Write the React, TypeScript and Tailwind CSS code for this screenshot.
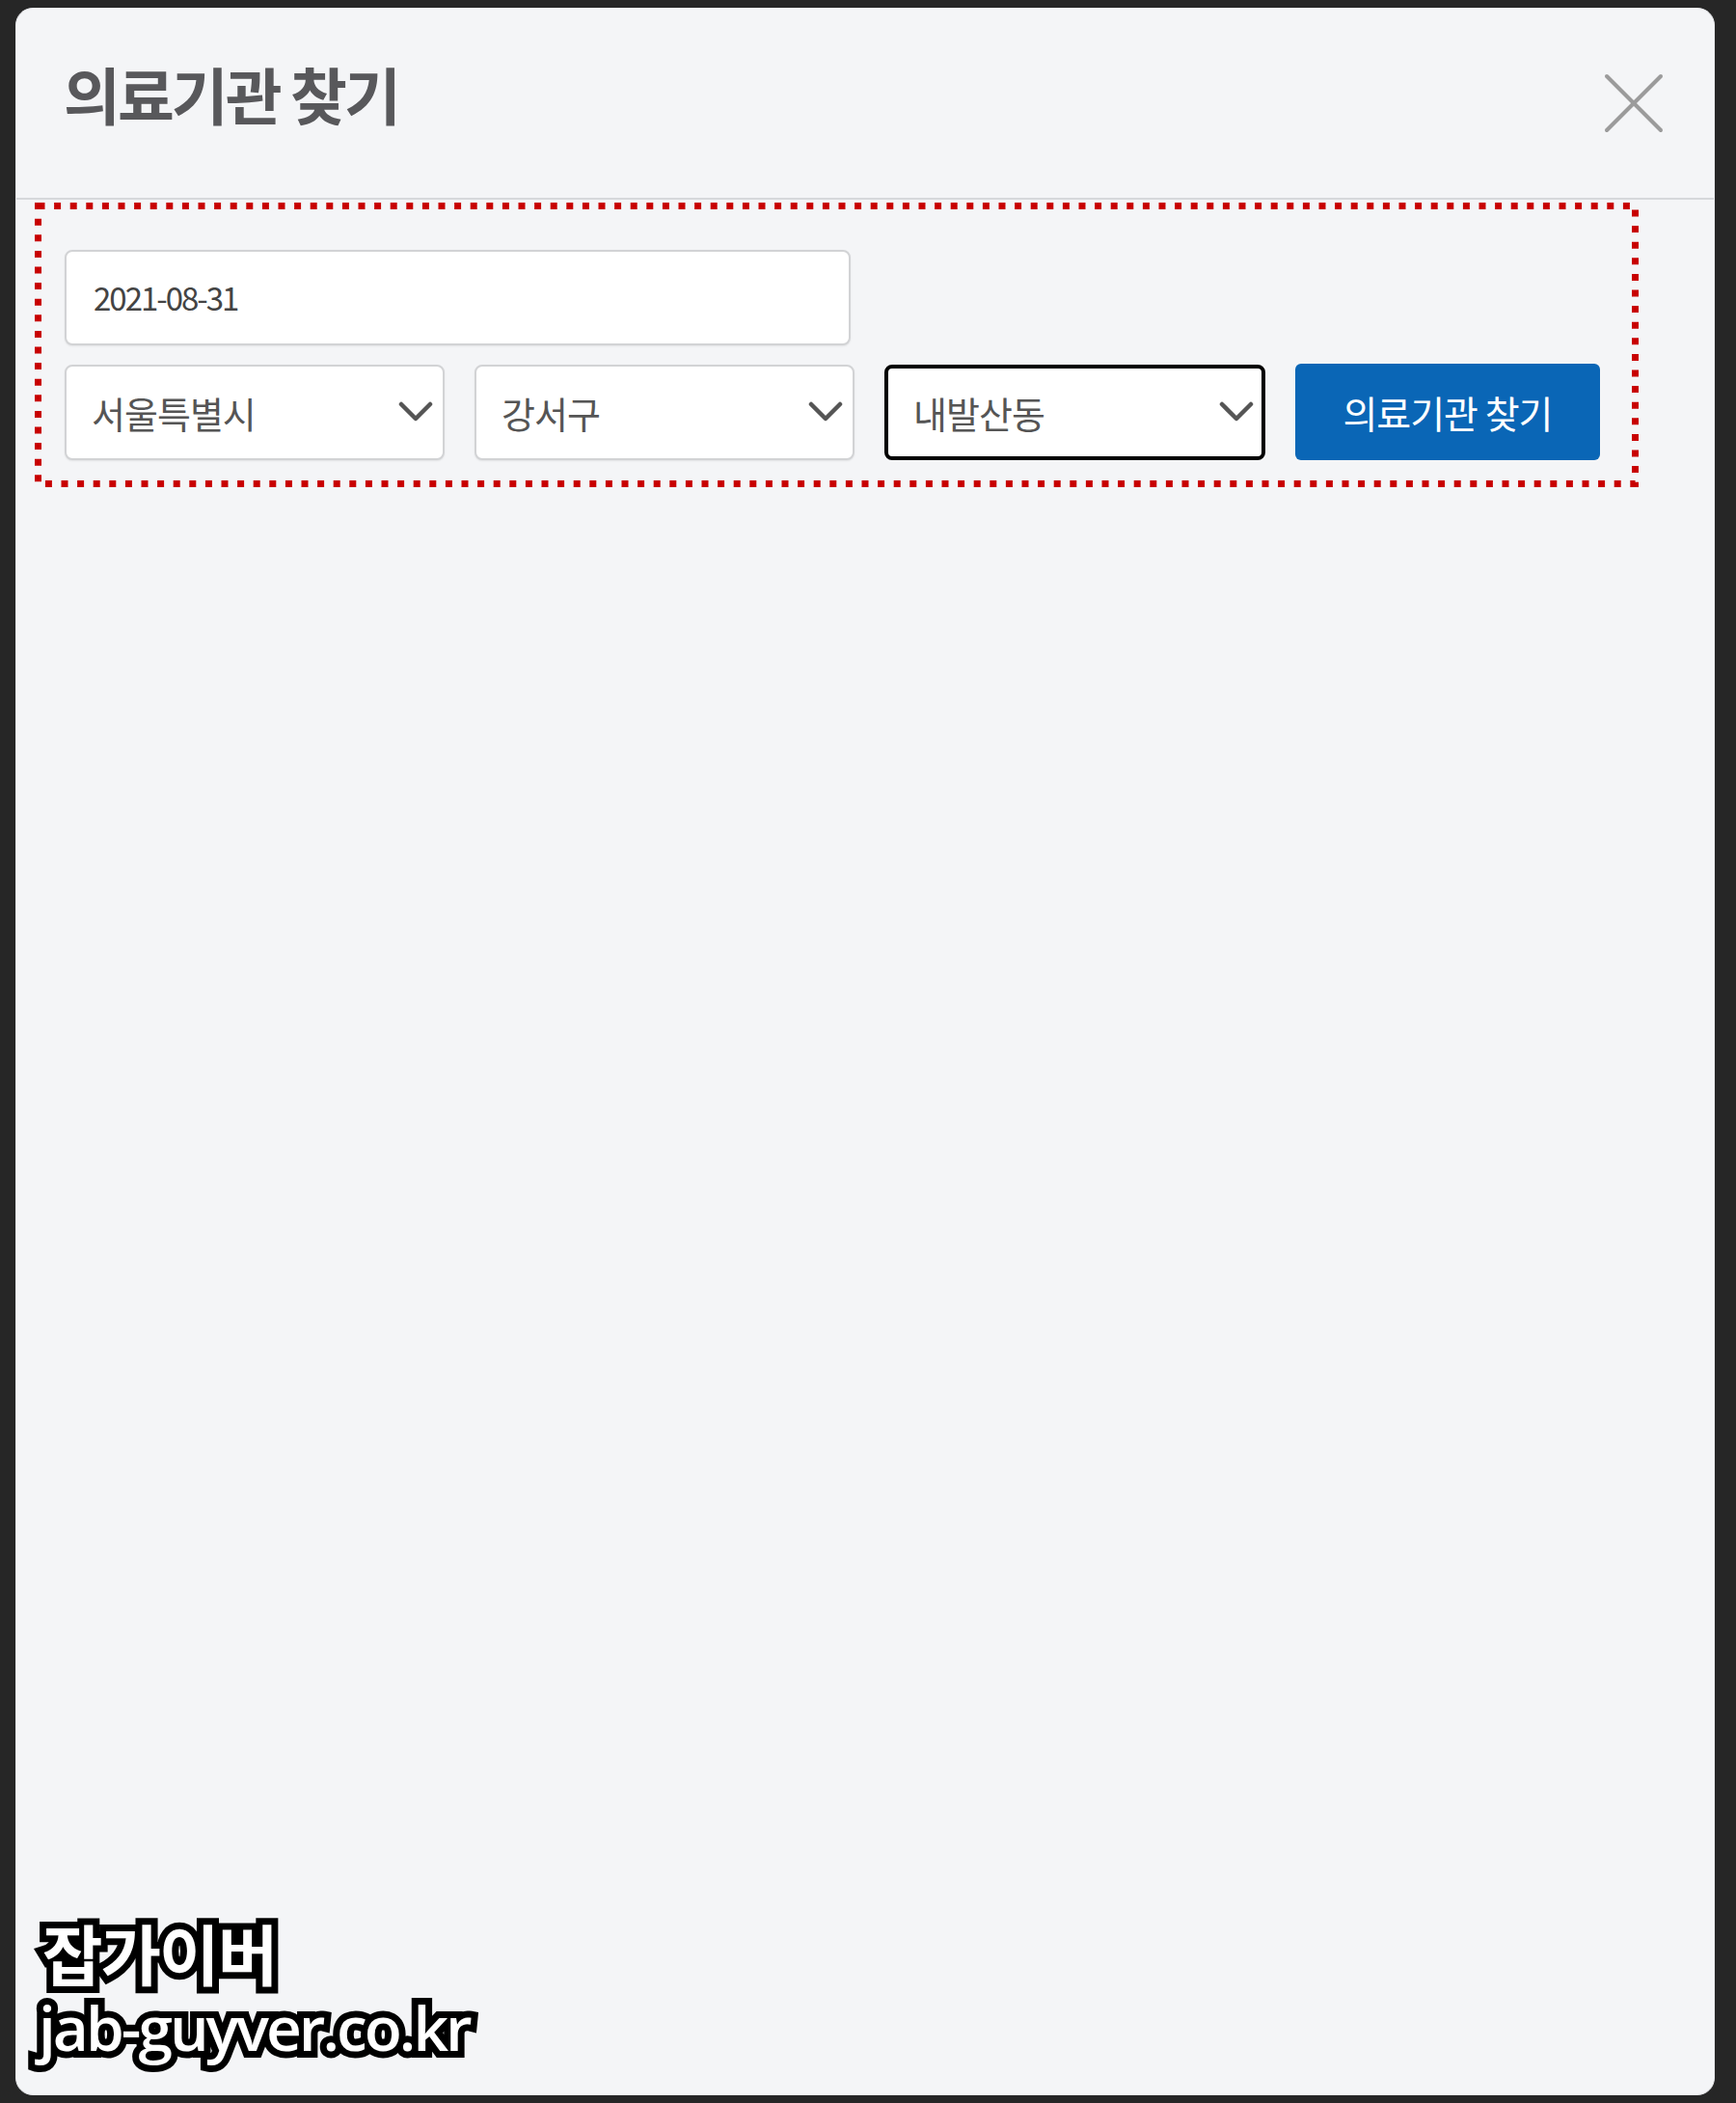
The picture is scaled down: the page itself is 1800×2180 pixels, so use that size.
function Chevron() {
    return (
        <svg width="36" height="22" viewBox="0 0 36 22" fill="none">
            <polyline points="3,3 18,18 33,3" stroke="#555" strokeWidth="4.5" strokeLinecap="round" strokeLinejoin="round" />
        </svg>
    );
}

function SelectBox({ label, focused }: { label: string; focused?: boolean }) {
    return (
        <div
            className={
                focused
                    ? "flex items-center justify-between w-[395px] h-[99px] bg-white rounded-[8px] border-[4px] border-black pl-[26px] pr-[8px]"
                    : "flex items-center justify-between w-[394px] h-[99px] bg-white rounded-[8px] border-2 border-[#d2d3d5] shadow-[0_1px_2px_rgba(0,0,0,0.08)] pl-[26px] pr-[10px]"
            }
        >
            <span className="text-[38px] text-[#555] tracking-[-1px]">{label}</span>
            <Chevron />
        </div>
    );
}

export default function App() {
    return (
        <div className="relative w-full h-[2180px] bg-[#262626] pt-[8px] pl-[16px] pr-[22px] pb-[8px] font-['Noto_Sans_CJK_KR',sans-serif]">
            <div className="h-full bg-[#f4f5f7] rounded-[18px] border border-[#e6e7ea] overflow-hidden">
                {/* header */}
                <div className="flex items-center justify-between h-[198px] pl-[49px] pr-[52px] border-b-2 border-[#d6d8db]">
                    <h1 className="text-[64px] font-bold text-[#58585b] tracking-[-3px] leading-none pb-[22px]">의료기관 찾기</h1>
                    <svg width="62" height="62" viewBox="0 0 62 62" fill="none">
                        <line x1="3" y1="3" x2="59" y2="59" stroke="#9b9b9b" strokeWidth="4" strokeLinecap="round" />
                        <line x1="59" y1="3" x2="3" y2="59" stroke="#9b9b9b" strokeWidth="4" strokeLinecap="round" />
                    </svg>
                </div>

                {/* search form, marked with a red dotted box */}
                <div className="relative mt-[3px] ml-[19px] w-[1663px] h-[295px] pl-[31px] pt-[49px] flex flex-col gap-[19px]">
                    <svg className="absolute inset-0 pointer-events-none" width="1663" height="295" fill="none">
                        <rect x="3.5" y="3.5" width="1656" height="288" stroke="#c80000" strokeWidth="7" strokeDasharray="7 9.6" />
                    </svg>
                    <div className="flex items-center w-[815px] h-[99px] bg-white rounded-[8px] border-2 border-[#d2d3d5] shadow-[0_1px_2px_rgba(0,0,0,0.08)] pl-[28px]">
                        <span className="text-[33px] text-[#444] tracking-[-2px]">2021-08-31</span>
                    </div>
                    <div className="flex items-center gap-[31px]">
                        <SelectBox label="서울특별시" />
                        <SelectBox label="강서구" />
                        <SelectBox label="내발산동" focused />
                        <button className="w-[316px] h-[100px] bg-[#0a66b6] rounded-[6px] text-white text-[39px] tracking-[-1px]">
                            의료기관 찾기
                        </button>
                    </div>
                </div>
            </div>

            {/* watermark */}
            <div className="absolute left-[40px] top-[1990px] flex flex-col text-white font-bold leading-none [paint-order:stroke_fill] [-webkit-text-stroke:14px_black]">
                <span className="text-[68px] tracking-[-2px] pl-[4px]">잡가이버</span>
                <span className="text-[64px] tracking-[-3px] font-['Open_Sans',sans-serif] font-semibold mt-[12px]">jab-guyver.co.kr</span>
            </div>
        </div>
    );
}
